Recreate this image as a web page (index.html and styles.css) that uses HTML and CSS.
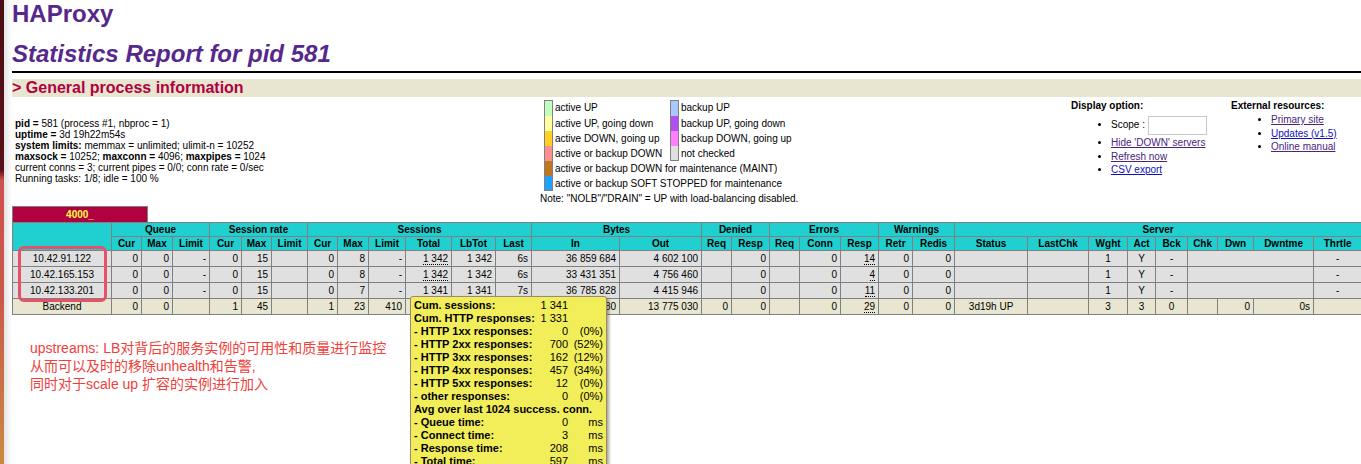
FILE: index.html
```html
<!DOCTYPE html>
<html lang="en">
<head>
<meta charset="utf-8">
<title>Statistics Report for HAProxy</title>
<link rel="stylesheet" href="styles.css">
</head>
<body>
<h1>HAProxy</h1>
<h2>Statistics Report for pid 581</h2>
<hr class="rule">
<h3>&gt; General process information</h3>
<div class="info">
  <p class="proc">
    <b>pid = </b>581 (process #1, nbproc = 1)<br>
    <b>uptime = </b>3d 19h22m54s<br>
    <b>system limits:</b> memmax = unlimited; ulimit-n = 10252<br>
    <b>maxsock = </b>10252; <b>maxconn = </b>4096; <b>maxpipes = </b>1024<br>
    current conns = 3; current pipes = 0/0; conn rate = 0/sec<br>
    Running tasks: 1/8; idle = 100 %
  </p>
  <div class="legend">
    <div class="legend-grid">
      <div class="lg-col">
        <div class="lg-item"><i class="sw s-up"></i>active UP</div>
        <div class="lg-item"><i class="sw s-upd"></i>active UP, going down</div>
        <div class="lg-item"><i class="sw s-dnu"></i>active DOWN, going up</div>
        <div class="lg-item"><i class="sw s-dn"></i>active or backup DOWN</div>
        <div class="lg-item"><i class="sw s-mt"></i>active or backup DOWN for maintenance (MAINT)</div>
        <div class="lg-item"><i class="sw s-ss"></i>active or backup SOFT STOPPED for maintenance</div>
      </div>
      <div class="lg-col">
        <div class="lg-item"><i class="sw s-bup"></i>backup UP</div>
        <div class="lg-item"><i class="sw s-bupd"></i>backup UP, going down</div>
        <div class="lg-item"><i class="sw s-bdnu"></i>backup DOWN, going up</div>
        <div class="lg-item"><i class="sw s-nc"></i>not checked</div>
      </div>
    </div>
    <div class="note">Note: "NOLB"/"DRAIN" = UP with load-balancing disabled.</div>
  </div>
  <div class="opts">
    <b>Display option:</b>
    <ul>
      <li class="scope">Scope : <input class="scope-in" type="text"></li>
      <li><a class="vis" href="#">Hide 'DOWN' servers</a></li>
      <li><a class="vis" href="#">Refresh now</a></li>
      <li><a href="#">CSV export</a></li>
    </ul>
  </div>
  <div class="res">
    <b>External resources:</b>
    <ul>
      <li><a class="vis" href="#">Primary site</a></li>
      <li><a href="#">Updates (v1.5)</a></li>
      <li><a class="vis" href="#">Online manual</a></li>
    </ul>
  </div>
</div>
<div class="px-title">4000_</div>
<div class="stats-wrap">
  <table class="tbl">
    <colgroup>
      <col class="w99"><col class="w30"><col class="w31"><col class="w37"><col class="w32"><col class="w30"><col class="w36">
      <col class="w30"><col class="w31"><col class="w37"><col class="w46"><col class="w44"><col class="w36">
      <col class="w88"><col class="w82"><col class="w30"><col class="w38"><col class="w30"><col class="w41"><col class="w38">
      <col class="w34"><col class="w42"><col class="w73"><col class="w61"><col class="w39"><col class="w28"><col class="w32">
      <col class="w30"><col class="w36"><col class="w60"><col class="w48">
    </colgroup>
    <thead>
      <tr>
        <th rowspan="2"></th>
        <th colspan="3">Queue</th><th colspan="3">Session rate</th><th colspan="6">Sessions</th>
        <th colspan="2">Bytes</th><th colspan="2">Denied</th><th colspan="3">Errors</th>
        <th colspan="2">Warnings</th><th colspan="9">Server</th>
      </tr>
      <tr>
        <th>Cur</th><th>Max</th><th>Limit</th><th>Cur</th><th>Max</th><th>Limit</th>
        <th>Cur</th><th>Max</th><th>Limit</th><th>Total</th><th>LbTot</th><th>Last</th>
        <th>In</th><th>Out</th><th>Req</th><th>Resp</th><th>Req</th><th>Conn</th><th>Resp</th>
        <th>Retr</th><th>Redis</th><th>Status</th><th>LastChk</th><th>Wght</th><th>Act</th><th>Bck</th>
        <th>Chk</th><th>Dwn</th><th>Dwntme</th><th>Thrtle</th>
      </tr>
    </thead>
    <tbody>
      <tr class="srv">
        <td class="c">10.42.91.122</td><td>0</td><td>0</td><td>-</td><td>0</td><td>15</td><td></td>
        <td>0</td><td>8</td><td>-</td><td><u>1 342</u></td><td>1 342</td><td>6s</td>
        <td>36 859 684</td><td>4 602 100</td><td></td><td>0</td><td></td><td>0</td><td><u>14</u></td>
        <td>0</td><td>0</td><td></td><td></td><td class="c">1</td><td class="c">Y</td><td class="c">-</td>
        <td colspan="3"></td><td class="c">-</td>
      </tr>
      <tr class="srv">
        <td class="c">10.42.165.153</td><td>0</td><td>0</td><td>-</td><td>0</td><td>15</td><td></td>
        <td>0</td><td>8</td><td>-</td><td><u>1 342</u></td><td>1 342</td><td>6s</td>
        <td>33 431 351</td><td>4 756 460</td><td></td><td>0</td><td></td><td>0</td><td><u>4</u></td>
        <td>0</td><td>0</td><td></td><td></td><td class="c">1</td><td class="c">Y</td><td class="c">-</td>
        <td colspan="3"></td><td class="c">-</td>
      </tr>
      <tr class="srv">
        <td class="c">10.42.133.201</td><td>0</td><td>0</td><td>-</td><td>0</td><td>15</td><td></td>
        <td>0</td><td>7</td><td>-</td><td>1 341</td><td>1 341</td><td>7s</td>
        <td>36 785 828</td><td>4 415 946</td><td></td><td>0</td><td></td><td>0</td><td><u>11</u></td>
        <td>0</td><td>0</td><td></td><td></td><td class="c">1</td><td class="c">Y</td><td class="c">-</td>
        <td colspan="3"></td><td class="c">-</td>
      </tr>
      <tr class="bk">
        <td class="c">Backend</td><td>0</td><td>0</td><td></td><td>1</td><td>45</td><td></td>
        <td>1</td><td>23</td><td>410</td><td>4 025</td><td>4 024</td><td>6s</td>
        <td>107 076 880</td><td>13 775 030</td><td>0</td><td>0</td><td></td><td>0</td><td><u>29</u></td>
        <td>0</td><td>0</td><td class="c">3d19h UP</td><td></td><td class="c">3</td><td class="c">3</td><td class="c">0</td>
        <td></td><td>0</td><td>0s</td><td></td>
      </tr>
    </tbody>
  </table>
  <div class="mark"></div>
  <div class="tip">
    <table class="tip-t">
      <tr><th>Cum. sessions:</th><td>1 341</td><td></td></tr>
      <tr><th>Cum. HTTP responses:</th><td>1 331</td><td></td></tr>
      <tr><th>- HTTP 1xx responses:</th><td>0</td><td>(0%)</td></tr>
      <tr><th>- HTTP 2xx responses:</th><td>700</td><td>(52%)</td></tr>
      <tr><th>- HTTP 3xx responses:</th><td>162</td><td>(12%)</td></tr>
      <tr><th>- HTTP 4xx responses:</th><td>457</td><td>(34%)</td></tr>
      <tr><th>- HTTP 5xx responses:</th><td>12</td><td>(0%)</td></tr>
      <tr><th>- other responses:</th><td>0</td><td>(0%)</td></tr>
      <tr><th colspan="3">Avg over last 1024 success. conn.</th></tr>
      <tr><th>- Queue time:</th><td>0</td><td>ms</td></tr>
      <tr><th>- Connect time:</th><td>3</td><td>ms</td></tr>
      <tr><th>- Response time:</th><td>208</td><td>ms</td></tr>
      <tr><th>- Total time:</th><td>597</td><td>ms</td></tr>
    </table>
  </div>
</div>
<p class="annot">upstreams: LB对背后的服务实例的可用性和质量进行监控<br>从而可以及时的移除unhealth和告警,<br>同时对于scale up 扩容的实例进行加入</p>
</body>
</html>
```
FILE: styles.css
```css
html { overflow: hidden; height: 100%; }
body {
  margin: 0;
  padding: 0 0 0 12px;
  height: 464px;
  box-sizing: border-box;
  overflow: hidden;
  font-family: "Liberation Sans", Arial, sans-serif;
  font-size: 10px;
  color: #000;
  background-color: #fff;
  background-image:
    linear-gradient(180deg, #4a0d14 0, #5a1018 170px, #cf5050 180px, #c95a4a 300px, #c98a40 464px),
    linear-gradient(90deg, #e4e4e4, #fff);
  background-size: 4px 100%, 8px 100%;
  background-position: 0 0, 4px 0;
  background-repeat: no-repeat;
}
h1 {
  margin: 0;
  height: 28px;
  line-height: 28px;
  font-size: 24px;
  font-weight: bold;
  color: #56288c;
}
h2 {
  margin: 11px 0 0;
  height: 30px;
  line-height: 30px;
  font-size: 24px;
  font-weight: bold;
  font-style: italic;
  color: #56288c;
}
.rule {
  margin: 2px 0 0;
  height: 2px;
  border: 0;
  background: #000;
}
h3 {
  margin: 6px 0 0;
  height: 18px;
  line-height: 18px;
  font-size: 16px;
  font-weight: bold;
  color: #b00040;
  background: #e8e6d0;
}
.info {
  display: flex;
  height: 109px;
  line-height: 11px;
}
.proc { margin: 21px 0 0; padding-left: 3px; width: 525px; flex: none; }
.legend { width: 531px; flex: none; padding-top: 3px; }
.legend-grid { display: flex; padding-left: 4px; }
.lg-col { width: 126px; }
.lg-item { display: flex; align-items: center; height: 15px; white-space: nowrap; }
.lg-item:first-child { height: 16px; line-height: 14px; }
.sw {
  flex: none;
  align-self: stretch;
  width: 7px;
  margin-right: 2px;
  border: 1px solid #808080;
  border-width: 0 1px;
}
.lg-item:first-child .sw { border-top-width: 1px; }
.lg-item:last-child .sw { border-bottom-width: 1px; }
.lg-item:first-child { padding-bottom: 1px; box-sizing: border-box; }
.lg-item:first-child .sw { margin-bottom: -1px; }
.s-up { background: #c0ffc0; }
.s-upd { background: #ffffa0; }
.s-dnu { background: #ffd020; }
.s-dn { background: #ff9090; }
.s-mt { background: #c07820; }
.s-ss { background: #20a0ff; }
.s-bup { background: #a8c8ff; }
.s-bupd { background: #b050f0; }
.s-bdnu { background: #ff80ff; }
.s-nc { background: #e0e0e0; }
.note { line-height: 15px; }
.opts { width: 160px; flex: none; padding-top: 3px; }
.res { flex: 1; padding-top: 3px; }
.info ul { margin: 0; padding-left: 40px; }
.opts li { height: 13.5px; line-height: 13px; }
.opts li.scope { height: 22px; line-height: 22px; margin-top: 3px; }
.res ul { margin-top: 2px; }
.res li { height: 13.5px; line-height: 13.5px; }
.scope-in {
  width: 59px;
  height: 19px;
  margin: 0;
  padding: 0;
  box-sizing: border-box;
  border: 1px solid #c8c8c8;
  background: #fff;
  vertical-align: middle;
}
a { color: #1010c0; }
a.vis { color: #4a2480; }
.px-title {
  width: 136px;
  height: 16px;
  line-height: 16px;
  box-sizing: border-box;
  text-align: center;
  font-weight: bold;
  color: #ffff40;
  background: #b00040;
  border: 1px solid #808080;
  border-bottom: 0;
}
.stats-wrap { position: relative; }
.tbl {
  table-layout: fixed;
  width: 1349px;
  border-collapse: collapse;
  font-size: 10px;
}
.tbl th, .tbl td {
  border: 1px solid #808080;
  padding: 0 3px;
  overflow: hidden;
  white-space: nowrap;
}
.tbl th { height: 13px; line-height: 13px; background: #20d0d0; font-weight: bold; text-align: center; }
.tbl td { height: 15px; line-height: 15px; text-align: right; }
.tbl td.c { text-align: center; }
.tbl u { text-decoration: none; border-bottom: 1px dotted #000; }
.srv td { background: #e0e0e0; }
.bk td { background: #e8e6d0; }
.w28 { width: 28px; } .w30 { width: 30px; } .w31 { width: 31px; } .w32 { width: 32px; }
.w34 { width: 34px; } .w36 { width: 36px; } .w37 { width: 37px; } .w38 { width: 38px; }
.w39 { width: 39px; } .w41 { width: 41px; } .w42 { width: 42px; } .w44 { width: 44px; }
.w46 { width: 46px; } .w48 { width: 48px; } .w60 { width: 60px; } .w61 { width: 61px; }
.w73 { width: 73px; } .w82 { width: 82px; } .w88 { width: 88px; } .w99 { width: 99px; }
.mark {
  position: absolute;
  left: 6px;
  top: 24px;
  width: 89px;
  height: 56px;
  box-sizing: border-box;
  border: 3px solid #e8506a;
  border-radius: 6px;
}
.tip {
  position: absolute;
  left: 398px;
  top: 74px;
  width: 197px;
  height: 180px;
  box-sizing: border-box;
  padding: 2px 3px;
  background: #f2ee5a;
  border: 1px solid #9a8a70;
  border-radius: 3px;
  box-shadow: 2px 2px 3px rgba(80, 70, 40, .5);
}
.tip-t { border-collapse: collapse; font-size: 11px; width: 189px; }
.tip-t th, .tip-t td { padding: 0; height: 13px; line-height: 13px; white-space: nowrap; }
.tip-t th { text-align: left; font-weight: bold; }
.tip-t td { text-align: right; }
.tip-t td:last-child { width: 35px; }
.annot {
  margin: 24px 0 0 18px;
  font-family: "Liberation Sans", "Noto Sans CJK SC", sans-serif;
  font-size: 14px;
  line-height: 18px;
  color: #f0403a;
}
```
